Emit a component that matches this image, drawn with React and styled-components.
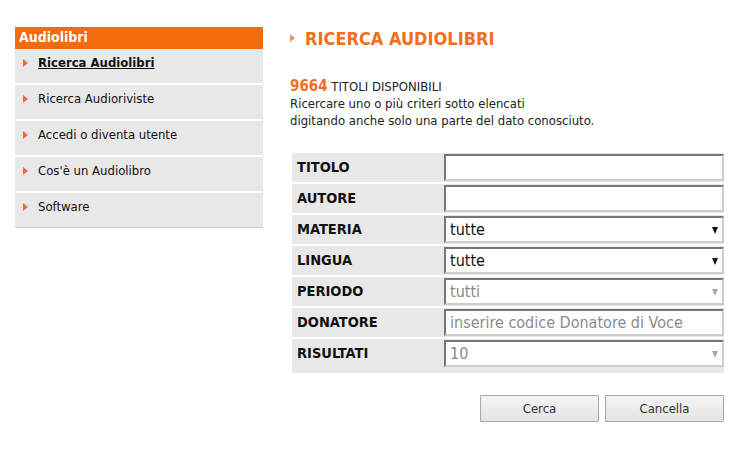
import styled, { createGlobalStyle } from "styled-components";

const GlobalStyle = createGlobalStyle`
  body {
    margin: 0;
    background: #fff;
    font-family: "DejaVu Sans Condensed", "DejaVu Sans", sans-serif;
    font-stretch: condensed;
    font-size: 13px;
    color: #222;
  }
`;

const Page = styled.div`
  display: flex;
  align-items: flex-start;
  gap: 27px;
  padding: 27px 0 0 15px;
`;

const Sidebar = styled.nav`
  width: 248px;
  background: #e8e8e8;
  border-bottom: 1px solid #cfcfcf;
`;

const SideHeader = styled.div`
  height: 22px;
  line-height: 20px;
  padding-left: 4px;
  background: #f26b0c;
  color: #fff;
  font-weight: bold;
  font-size: 14px;
`;

const MenuItem = styled.a`
  display: flex;
  align-items: center;
  gap: 10px;
  height: 16px;
  padding: 6px 0 12px 8px;
  border-bottom: 2px solid #fff;
  color: #111;
  font-size: 13px;
  line-height: 16px;
  font-weight: ${(props) => (props.active ? "bold" : "normal")};
  text-decoration: ${(props) => (props.active ? "underline" : "none")};
  &:last-child {
    border-bottom: none;
  }
`;

const Arrow = styled.span`
  width: 0;
  height: 0;
  border-top: 4px solid transparent;
  border-bottom: 4px solid transparent;
  border-left: 5px solid ${(props) => props.color || "#f2693a"};
  flex-shrink: 0;
`;

const Main = styled.main`
  width: 434px;
`;

const Title = styled.h1`
  display: flex;
  align-items: center;
  gap: 10px;
  margin: 0;
  height: 22px;
  color: #f07020;
  font-size: 18px;
  font-weight: bold;
`;

const Intro = styled.div`
  margin-top: 29px;
  line-height: 17px;
  font-size: 13px;
  color: #222;
`;

const Count = styled.span`
  color: #f07020;
  font-weight: bold;
  font-size: 15px;
`;

const Small = styled.span`
  font-size: 13px;
`;

const Form = styled.form`
  margin-top: 24px;
  margin-left: 2px;
`;

const Grid = styled.div`
  display: grid;
  grid-template-columns: 152px 280px;
  row-gap: 2px;
`;

const Label = styled.div`
  background: #e8e8e8;
  padding: ${(props) => (props.last ? "1px 5px 6px" : "1px 5px")};
  height: 27px;
  line-height: 27px;
  font-weight: bold;
  font-size: 14.5px;
  color: #111;
`;

const Cell = styled.div`
  position: relative;
  background: #e8e8e8;
  padding: ${(props) => (props.last ? "1px 0 6px" : "1px 0")};
`;

const fieldBorder = `
  box-sizing: border-box;
  width: 100%;
  height: 27px;
  border-top: 2px solid #767676;
  border-left: 2px solid #767676;
  border-bottom: 2px solid #cdcdcd;
  border-right: 2px solid #cdcdcd;
  background: #fff;
  font-family: inherit;
  font-stretch: condensed;
  font-size: 16px;
  padding: 0 4px;
  outline: none;
`;

const TextInput = styled.input`
  ${fieldBorder}
  color: #222;
  &::placeholder {
    color: #8a8a8a;
  }
`;

const Select = styled.select`
  ${fieldBorder}
  appearance: none;
  color: ${(props) => (props.disabled ? "#8a8a8a" : "#111")};
  opacity: 1;
`;

const Caret = styled.span`
  position: absolute;
  right: 6px;
  top: 12px;
  width: 0;
  height: 0;
  border-left: 3.5px solid transparent;
  border-right: 3.5px solid transparent;
  border-top: 7px solid ${(props) => (props.dim ? "#a8a8a8" : "#111")};
  pointer-events: none;
`;

const Buttons = styled.div`
  display: flex;
  justify-content: flex-end;
  gap: 6px;
  margin-top: 22px;
`;

const Button = styled.button`
  width: 119px;
  height: 27px;
  border: 1px solid #a8a8a8;
  border-radius: 1px;
  background: linear-gradient(#f4f4f4, #e4e4e4);
  font-family: inherit;
  font-stretch: condensed;
  font-size: 13px;
  color: #333;
`;

const menu = [
  "Ricerca Audiolibri",
  "Ricerca Audioriviste",
  "Accedi o diventa utente",
  "Cos'è un Audiolibro",
  "Software",
];

const fields = [
  { label: "TITOLO", type: "text" },
  { label: "AUTORE", type: "text" },
  { label: "MATERIA", type: "select", value: "tutte" },
  { label: "LINGUA", type: "select", value: "tutte" },
  { label: "PERIODO", type: "select", value: "tutti", disabled: true },
  { label: "DONATORE", type: "text", placeholder: "inserire codice Donatore di Voce" },
  { label: "RISULTATI", type: "select", value: "10", disabled: true },
];

export default function App() {
  return (
    <>
      <GlobalStyle />
      <Page>
        <Sidebar>
          <SideHeader>Audiolibri</SideHeader>
          {menu.map((item, i) => (
            <MenuItem key={item} active={i === 0}>
              <Arrow />
              <span>{item}</span>
            </MenuItem>
          ))}
        </Sidebar>
        <Main>
          <Title>
            <Arrow color="#f0905a" />
            RICERCA AUDIOLIBRI
          </Title>
          <Intro>
            <Count>9664</Count> <Small>TITOLI DISPONIBILI</Small>
            <br />
            Ricercare uno o più criteri sotto elencati
            <br />
            digitando anche solo una parte del dato conosciuto.
          </Intro>
          <Form onSubmit={(e) => e.preventDefault()}>
            <Grid>
              {fields.map((f, i) => {
                const last = i === fields.length - 1;
                return [
                  <Label key={f.label + "l"} last={last}>
                    {f.label}
                  </Label>,
                  <Cell key={f.label + "c"} last={last}>
                    {f.type === "text" ? (
                      <TextInput placeholder={f.placeholder} />
                    ) : (
                      <>
                        <Select disabled={f.disabled} defaultValue={f.value}>
                          <option>{f.value}</option>
                        </Select>
                        <Caret dim={f.disabled} />
                      </>
                    )}
                  </Cell>,
                ];
              })}
            </Grid>
            <Buttons>
              <Button type="submit">Cerca</Button>
              <Button type="button">Cancella</Button>
            </Buttons>
          </Form>
        </Main>
      </Page>
    </>
  );
}
